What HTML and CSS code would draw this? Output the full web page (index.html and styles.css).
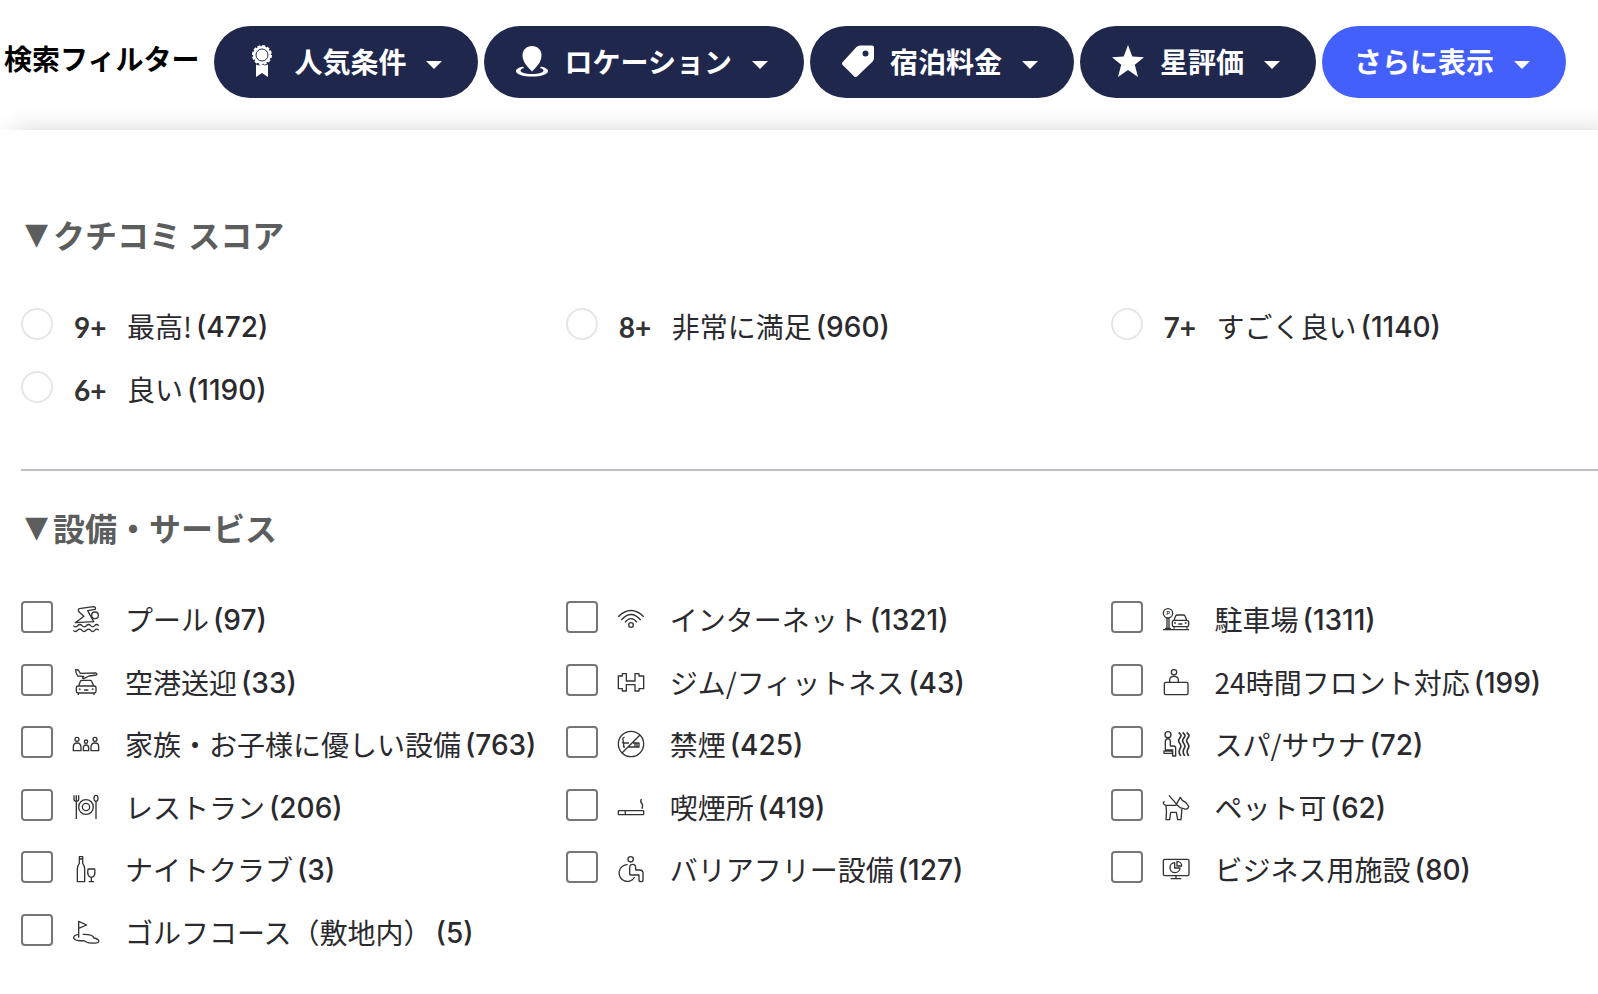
FILE: index.html
```
<!DOCTYPE html>
<html lang="ja">
<head>
    <meta charset="UTF-8">
    <meta name="viewport" content="width=device-width, initial-scale=1.0">
    <title>検索フィルター</title>
    <link rel="stylesheet" href="styles.css">
</head>
<body>
    <header class="filter-bar">
        <div class="filter-title">検索フィルター</div>
        <div class="filter-buttons">
            <button class="btn" type="button">
                <svg class="btn-icon" viewBox="0 0 32 32">
                    <circle cx="16" cy="10" r="9"/>
                    <circle cx="16" cy="10" r="9" fill="none" stroke="#fff" stroke-width="2" stroke-dasharray="3 1.7"/>
                    <circle cx="16" cy="10" r="6" fill="none" stroke="#20274d" stroke-width="1"/>
                    <path d="M10 19.500l3 1 3-1 3 1 3-1V32l-6-4-6 4z"/>
                </svg>
                <span>人気条件</span>
                <span class="caret"></span>
            </button>
            <button class="btn" type="button">
                <svg class="btn-icon" viewBox="0 0 32 32">
                    <path d="M7 21.500C3 22.500 0 24 0 26c0 3.500 7 5.500 16 5.500s16-2 16-5.500c0-2-3-3.500-7-4.500l-1 1.500c2 .6 3.500 1.500 3.500 2.500 0 2-5 3.500-11.500 3.500S4.500 27.500 4.500 25.500c0-1 1.500-1.900 3.500-2.500z"/>
                    <path d="M16 1c5.500 0 9.500 4 9.500 9.500 0 6-4.500 11-9.500 16-5-5-9.500-10-9.500-16C6.500 5 10.500 1 16 1z"/>
                </svg>
                <span>ロケーション</span>
                <span class="caret"></span>
            </button>
            <button class="btn" type="button">
                <svg class="btn-icon" viewBox="0 0 32 32">
                    <path fill-rule="evenodd" d="M18 .5h12q2 0 2 2V13q0 2-1.300 3.400L15.300 31.300q-1.800 1.500-3.300 0L.7 20q-1.400-1.500 0-3L14.500 2q1.500-1.500 3.500-1.500zM23.500 5.500a3 3 0 1 0 0 6 3 3 0 0 0 0-6z"/>
                </svg>
                <span>宿泊料金</span>
                <span class="caret"></span>
            </button>
            <button class="btn" type="button">
                <svg class="btn-icon" viewBox="0 0 32 32">
                    <path d="M16 0l4.300 11.500L32 12.200l-9.200 7.500L26 32l-10-6.900L6 32l3.200-12.300L0 12.200l11.700-.7z"/>
                </svg>
                <span>星評価</span>
                <span class="caret"></span>
            </button>
            <button class="btn btn-more" type="button">
                <span>さらに表示</span>
                <span class="caret"></span>
            </button>
        </div>
    </header>

    <main class="filter-panel">
        <section class="filter-section">
            <h2 class="section-title"><span class="marker">▼</span>クチコミ スコア</h2>
            <div class="option-grid">
                <label class="option"><input type="radio" name="score"><b class="score">9+</b><span>最高!</span><span class="count">(472)</span></label>
                <label class="option"><input type="radio" name="score"><b class="score">8+</b><span>非常に満足</span><span class="count">(960)</span></label>
                <label class="option"><input type="radio" name="score"><b class="score">7+</b><span>すごく良い</span><span class="count">(1140)</span></label>
                <label class="option"><input type="radio" name="score"><b class="score">6+</b><span>良い</span><span class="count">(1190)</span></label>
            </div>
        </section>

        <section class="filter-section">
            <h2 class="section-title"><span class="marker">▼</span>設備・サービス</h2>
            <div class="option-grid">
                <label class="option">
                    <input type="checkbox">
                    <svg class="icon" viewBox="0 0 84 84">
                        <path d="M10 53L36 34 22 22q-6-9 0-11L64 5q8 0 6 8l-23 4 18 33q-25 1-55 3z"/>
                        <circle cx="69" cy="31" r="10"/>
                        <path d="M4 62q6 7 13 0t13 0 13 0 13 0 12 0 12 0M4 76q6 7 13 0t13 0 13 0 13 0 12 0 12 0"/>
                    </svg>
                    <span>プール</span><span class="count">(97)</span>
                </label>
                <label class="option">
                    <input type="checkbox">
                    <svg class="icon" viewBox="0 0 84 84">
                        <path d="M4 35Q42-2 80 35M13 45Q42 12 71 45M24 52Q42 30 60 52"/>
                        <circle cx="42" cy="60" r="7"/>
                    </svg>
                    <span>インターネット</span><span class="count">(1321)</span>
                </label>
                <label class="option">
                    <input type="checkbox">
                    <svg class="icon" viewBox="0 0 84 84">
                        <circle cx="18" cy="25" r="14"/>
                        <text x="13" y="31" class="sign">P</text>
                        <path d="M15 39v31M21 39v31M11 74v-4h14v4M3 74h78"/>
                        <path d="M36 45l5-12q1-3 5-3h18q4 0 5 3l5 12M36 46h38q6 0 6 6v8q0 5-5 5H36q-5 0-5-5v-8q0-6 5-6zM36 66v5M75 66v5M49 57h12"/>
                        <circle cx="39" cy="54" r="1"/>
                        <circle cx="71" cy="54" r="1"/>
                    </svg>
                    <span>駐車場</span><span class="count">(1311)</span>
                </label>

                <label class="option">
                    <input type="checkbox">
                    <svg class="icon" viewBox="0 0 84 84">
                        <path d="M11 5l8 1 6 10 47-1q5 3 1 6l-22 3-16 8-4-2 4-5-18-1q-6-9-6-19z"/>
                        <path d="M20 54l5-14q1-3 5-3h24q4 0 5 3l6 14M19 54h48q5 0 5 6v10q0 5-5 5H18q-5 0-5-5V60q0-6 6-6zM19 76v5M66 76v5M36 66h13"/>
                        <circle cx="23" cy="64" r="1"/>
                        <circle cx="62" cy="64" r="1"/>
                    </svg>
                    <span>空港送迎</span><span class="count">(33)</span>
                </label>
                <label class="option">
                    <input type="checkbox">
                    <svg class="icon" viewBox="0 0 84 84">
                        <path d="M4 24h12v-7h12v22h26V17h12v7h14v38H66v7H54V50H28v19H16v-7H4z"/>
                    </svg>
                    <span>ジム/フィットネス</span><span class="count">(43)</span>
                </label>
                <label class="option">
                    <input type="checkbox">
                    <svg class="icon" viewBox="0 0 84 84">
                        <circle cx="36" cy="13" r="8"/>
                        <path d="M23 43v-7q0-11 13-11t13 11v7"/>
                        <rect x="7" y="43" width="71" height="37" rx="4"/>
                    </svg>
                    <span>24時間フロント対応</span><span class="count">(199)</span>
                </label>

                <label class="option">
                    <input type="checkbox">
                    <svg class="icon" viewBox="0 0 84 84">
                        <circle cx="15" cy="28" r="6"/>
                        <circle cx="42" cy="35" r="5"/>
                        <circle cx="69" cy="28" r="6"/>
                        <path d="M4 62V51q0-12 11-12t12 12v11zM34 62v-8q0-9 8-9t8 9v8zM57 62V51q0-12 12-12t11 12v11z"/>
                    </svg>
                    <span>家族・お子様に優しい設備</span><span class="count">(763)</span>
                </label>
                <label class="option">
                    <input type="checkbox">
                    <svg class="icon" viewBox="0 0 84 84">
                        <circle cx="42" cy="42" r="38"/>
                        <path d="M69 15L15 69M48 39h18v12H32M36 39H20v12h4M54 39v12M60 39v12M23 21q-8 3-5 9t-3 9"/>
                    </svg>
                    <span>禁煙</span><span class="count">(425)</span>
                </label>
                <label class="option">
                    <input type="checkbox">
                    <svg class="icon" viewBox="0 0 84 84">
                        <circle cx="18" cy="14" r="9"/>
                        <path d="M10 56V36q0-10 8-10 7 1 7 8v14h10q6 0 6 6v24h-9V60H14q-4 0-4-4zM6 63h25v7H6z"/>
                        <path class="steam" d="M50 7c9 9 9 9 3 18s-3 9 2 18-1 10-3 18 0 9 4 17M62 7c9 9 9 9 3 18s-3 9 2 18-1 10-3 18 0 9 4 17M74 7c9 9 9 9 3 18s-3 9 2 18-1 10-3 18 0 9 4 17"/>
                    </svg>
                    <span>スパ/サウナ</span><span class="count">(72)</span>
                </label>

                <label class="option">
                    <input type="checkbox">
                    <svg class="icon" viewBox="0 0 84 84">
                        <path d="M6 7v12q0 6 7 6t7-6V7M13 7v71M72 26v52"/>
                        <circle cx="42" cy="42" r="22"/>
                        <circle cx="42" cy="42" r="11"/>
                        <ellipse cx="72" cy="16" rx="6" ry="9"/>
                    </svg>
                    <span>レストラン</span><span class="count">(206)</span>
                </label>
                <label class="option">
                    <input type="checkbox">
                    <svg class="icon" viewBox="0 0 84 84">
                        <rect x="4" y="53" width="76" height="12" rx="2"/>
                        <path d="M25 53v12M73 18q-4 8 1 13t1 16"/>
                    </svg>
                    <span>喫煙所</span><span class="count">(419)</span>
                </label>
                <label class="option">
                    <input type="checkbox">
                    <svg class="icon" viewBox="0 0 84 84">
                        <path d="M8 25q-6 3-3 8t12 4h24l14-24 6 9 10 6 9 12q-2 10-12 8l-8-3-3 35H47l-4-22H26l-3 22H12q3-22 0-43M21 7l24 28M44 35l13 11"/>
                    </svg>
                    <span>ペット可</span><span class="count">(62)</span>
                </label>

                <label class="option">
                    <input type="checkbox">
                    <svg class="icon" viewBox="0 0 84 84">
                        <path d="M22 5h10v20q6 8 6 16v39H16V41q0-8 6-16zM22 12h10"/>
                        <path d="M48 42h20q4 24-10 25-14-1-10-25zM58 67v13M50 80h16"/>
                    </svg>
                    <span>ナイトクラブ</span><span class="count">(3)</span>
                </label>
                <label class="option">
                    <input type="checkbox">
                    <svg class="icon" viewBox="0 0 84 84">
                        <circle cx="41" cy="13" r="8"/>
                        <path d="M32 29A25 25 0 1 0 53 66"/>
                        <path d="M38 58V38q0-10 9-10t9 10v7h12q10 0 10 10v19q0 6-6 6t-6-6V60H41q-3 0-3-2z"/>
                    </svg>
                    <span>バリアフリー設備</span><span class="count">(127)</span>
                </label>
                <label class="option">
                    <input type="checkbox">
                    <svg class="icon" viewBox="0 0 84 84">
                        <rect x="4" y="13" width="77" height="49" rx="4"/>
                        <path d="M42 62v9M26 71h32M38 23a15 15 0 1 0 16 16H38zM45 19a14 14 0 0 1 14 14H45z"/>
                    </svg>
                    <span>ビジネス用施設</span><span class="count">(80)</span>
                </label>

                <label class="option">
                    <input type="checkbox">
                    <svg class="icon" viewBox="0 0 84 84">
                        <path d="M20 59V10l24 11-24 10"/>
                        <path d="M20 49Q3 52 5 61q8 9 26 7 7 0 12 4 12 6 34 2 6-4 1-9-6-4-12-5-4-12-34-11"/>
                    </svg>
                    <span>ゴルフコース（敷地内）</span><span class="count">(5)</span>
                </label>
            </div>
        </section>
    </main>
</body>
</html>
```
FILE: styles.css
```
* {
    box-sizing: border-box;
    margin: 0;
    padding: 0;
}

body {
    background-color: #fff;
    color: #2a2a2e;
    font-family: 'Noto Sans CJK JP', sans-serif;
    font-size: 28px;
    line-height: 40px;
}

.filter-bar {
    display: flex;
    align-items: center;
    gap: 15px;
    padding: 26px 4px 32px;
}

.filter-title {
    padding-bottom: 8px;
    color: #000;
    font-weight: bold;
    white-space: nowrap;
}

.filter-buttons {
    display: flex;
    gap: 6px;
}

.btn {
    display: flex;
    align-items: center;
    height: 72px;
    padding: 0 36px 2px 32px;
    border: none;
    border-radius: 36px;
    background-color: #20274d;
    color: #fff;
    font: inherit;
    font-weight: bold;
    white-space: nowrap;
    cursor: pointer;
}

.btn-more {
    background-color: #4460fc;
}

.btn-icon {
    width: 32px;
    height: 32px;
    margin-right: 16px;
    fill: #fff;
}

.caret {
    margin: 8px 0 0 20px;
    border: 8px solid transparent;
    border-top-color: #fff;
    border-bottom: none;
}

.filter-panel {
    padding: 80px 0 32px 21px;
    background-color: #fff;
    box-shadow: 12px 0 24px rgba(0, 0, 0, 0.16);
}

.filter-section + .filter-section {
    margin-top: 49px;
    padding-top: 32px;
    border-top: 2px solid #bdc1c6;
}

.section-title {
    display: flex;
    align-items: center;
    margin-bottom: 37px;
    color: #5c5e5d;
    font-size: 32px;
    line-height: 48px;
}

.marker {
    width: 32px;
    padding-left: 4px;
    font-family: 'DejaVu Sans', sans-serif;
    font-size: 30px;
}

.option-grid {
    display: grid;
    grid-template-columns: 19fr 19fr 17fr;
    grid-auto-rows: 62px 63px;
}

.option {
    display: flex;
    align-items: center;
    white-space: nowrap;
    cursor: pointer;
}

.option input {
    appearance: none;
    width: 32px;
    height: 32px;
    margin: 0 19px 4px 0;
    border: 2px solid #767676;
    border-radius: 4px;
    background-color: #fff;
}

.option input[type="radio"] {
    border-color: #e6e6e6;
    border-radius: 50%;
}

.option input:checked {
    background-color: #4460fc;
}

.score {
    width: 55px;
    padding: 2px 0 0 2px;
    color: #333;
    font-family: Lato, sans-serif;
}

.count {
    margin-left: 4px;
    padding-top: 2px;
    font-family: Inter, sans-serif;
    font-weight: 500;
}

.icon {
    width: 28px;
    height: 28px;
    margin-right: 25px;
    fill: none;
    stroke: #333;
    stroke-width: 4;
    stroke-linejoin: round;
}

.icon .steam {
    stroke-width: 5;
}

.sign {
    fill: #333;
    stroke: none;
    font-family: Lato, sans-serif;
    font-size: 18px;
    font-weight: bold;
}
```
